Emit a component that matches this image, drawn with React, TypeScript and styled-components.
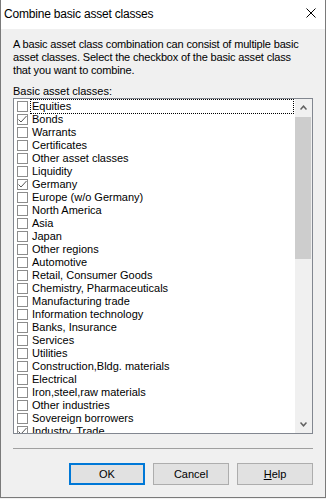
import React from "react";
import styled, { createGlobalStyle } from "styled-components";

const Global = createGlobalStyle`
  html, body { margin: 0; padding: 0; background: #f0f0f0; }
  body { font-family: "Liberation Sans", Arial, sans-serif; color: #000; }
`;

const Frame = styled.div`
  box-sizing: border-box;
  width: 326px;
  height: 498px;
  display: flex;
  flex-direction: column;
  border: 1px solid #7a7a7a;
  border-top: none;
  background: #f0f0f0;
`;

const TitleBar = styled.div`
  height: 29px;
  flex: none;
  background: #fff;
  display: flex;
  align-items: center;
  justify-content: space-between;
  padding-left: 3px;
`;

const Title = styled.span`
  font-family: "Liberation Sans", Arial, sans-serif;
  font-size: 12px;
  line-height: 16px;
  letter-spacing: -0.2px;
  margin-top: -2px;
`;

const CloseButton = styled.div`
  width: 29px;
  height: 29px;
  display: flex;
  align-items: center;
  justify-content: center;
  margin-top: -4px;
`;

const Body = styled.div`
  flex: 1;
  display: flex;
  flex-direction: column;
  padding: 9px 12px 0;
  font-size: 11px;
  line-height: 13px;
`;

const Description = styled.p`
  margin: 0;
  width: 290px;
  letter-spacing: -0.16px;
`;

const FieldLabel = styled.div`
  margin-top: 8px;
`;

const ListBox = styled.div`
  box-sizing: border-box;
  height: 336px;
  border: 1px solid #828790;
  background: #fff;
  display: flex;
`;

const Items = styled.ul`
  flex: 1;
  margin: 0;
  padding: 1px 0 0 0;
  list-style: none;
  overflow: hidden;
`;

const Row = styled.li`
  display: flex;
  align-items: center;
  height: 13px;
  padding-left: 3px;
`;

const Box = styled.span`
  box-sizing: border-box;
  flex: none;
  width: 11px;
  height: 11px;
  border: 1px solid #8c8c8c;
  background: #fff;
  display: flex;
  align-items: center;
  justify-content: center;
`;

const ItemLabel = styled.span<{ $focused?: boolean }>`
  flex: 1;
  margin-left: 3px;
  margin-right: 2px;
  padding-left: 1px;
  white-space: nowrap;
  overflow: hidden;
  ${(p) => (p.$focused ? "outline: 1px dotted #000; outline-offset: 0;" : "")}
`;

const ScrollBar = styled.div`
  flex: none;
  width: 17px;
  display: flex;
  flex-direction: column;
  background: #f0f0f0;
`;

const ScrollButton = styled.div`
  height: 17px;
  flex: none;
  display: flex;
  align-items: center;
  justify-content: center;
`;

const Track = styled.div`
  flex: 1;
  display: flex;
  flex-direction: column;
`;

const Thumb = styled.div`
  height: 142px;
  margin: 1px 1px 0 0;
  background: #cdcdcd;
`;

const Separator = styled.div`
  margin-top: 14px;
  height: 1px;
  background: #a0a0a0;
`;

const ButtonRow = styled.div`
  margin-top: 14px;
  display: flex;
  justify-content: flex-end;
  gap: 8px;
`;

const DialogButton = styled.button<{ $primary?: boolean }>`
  box-sizing: border-box;
  width: 76px;
  height: 22px;
  padding: 0;
  background: #e1e1e1;
  border: ${(p) => (p.$primary ? "2px solid #0078d7" : "1px solid #adadad")};
  font-family: "Liberation Sans", Arial, sans-serif;
  font-size: 11px;
  color: #000;
`;

const items: [string, boolean][] = [
  ["Equities", false],
  ["Bonds", true],
  ["Warrants", false],
  ["Certificates", false],
  ["Other asset classes", false],
  ["Liquidity", false],
  ["Germany", true],
  ["Europe (w/o Germany)", false],
  ["North America", false],
  ["Asia", false],
  ["Japan", false],
  ["Other regions", false],
  ["Automotive", false],
  ["Retail, Consumer Goods", false],
  ["Chemistry, Pharmaceuticals", false],
  ["Manufacturing trade", false],
  ["Information technology", false],
  ["Banks, Insurance", false],
  ["Services", false],
  ["Utilities", false],
  ["Construction,Bldg. materials", false],
  ["Electrical", false],
  ["Iron,steel,raw materials", false],
  ["Other industries", false],
  ["Sovereign borrowers", false],
  ["Industry, Trade", true],
];

const Check = () => (
  <svg width="9" height="9" viewBox="0 0 9 9">
    <polyline points="0.5,4.5 3,7 8.5,1" fill="none" stroke="#555" strokeWidth="1" />
  </svg>
);

const Arrow = ({ up }: { up?: boolean }) => (
  <svg width="7" height="5" viewBox="0 0 7 5">
    <polyline
      points={up ? "0.5,4.5 3.5,1.2 6.5,4.5" : "0.5,0.5 3.5,3.8 6.5,0.5"}
      fill="none"
      stroke="#606060"
      strokeWidth="1.5"
    />
  </svg>
);

export default function App() {
  return (
    <>
      <Global />
      <Frame>
        <TitleBar>
          <Title>Combine basic asset classes</Title>
          <CloseButton>
            <svg width="10" height="10" viewBox="0 0 10 10">
              <path d="M0.5 0.5 L9.5 9.5 M9.5 0.5 L0.5 9.5" stroke="#000" strokeWidth="1" />
            </svg>
          </CloseButton>
        </TitleBar>
        <Body>
          <Description>
            A basic asset class combination can consist of multiple basic asset classes. Select the checkbox of the basic asset class that you want to combine.
          </Description>
          <FieldLabel>Basic asset classes:</FieldLabel>
          <ListBox>
            <Items>
              {items.map(([name, checked], i) => (
                <Row key={name}>
                  <Box>{checked && <Check />}</Box>
                  <ItemLabel $focused={i === 0}>{name}</ItemLabel>
                </Row>
              ))}
            </Items>
            <ScrollBar>
              <ScrollButton>
                <Arrow up />
              </ScrollButton>
              <Track>
                <Thumb />
              </Track>
              <ScrollButton>
                <Arrow />
              </ScrollButton>
            </ScrollBar>
          </ListBox>
          <Separator />
          <ButtonRow>
            <DialogButton $primary>OK</DialogButton>
            <DialogButton>Cancel</DialogButton>
            <DialogButton>
              <u>H</u>elp
            </DialogButton>
          </ButtonRow>
        </Body>
      </Frame>
    </>
  );
}
